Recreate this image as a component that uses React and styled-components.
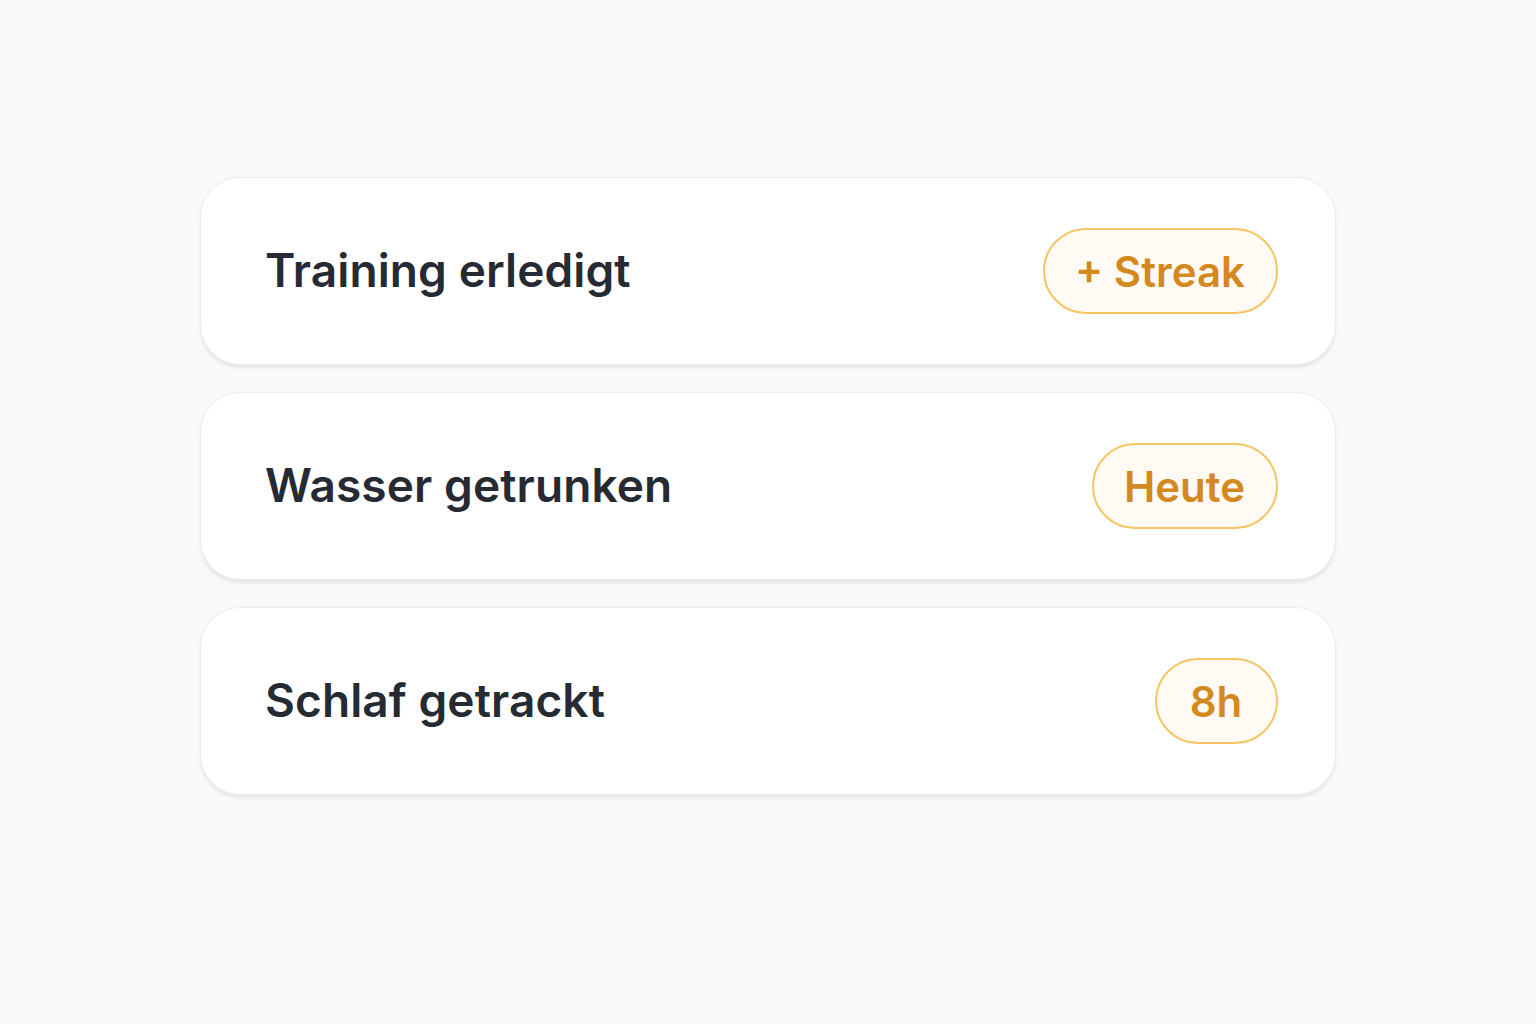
import React from "react";
import styled, { createGlobalStyle } from "styled-components";

const GlobalStyle = createGlobalStyle`
  html, body {
    margin: 0;
    padding: 0;
    background: #fafafa;
    font-family: Inter, "Noto Sans", sans-serif;
  }
`;

const Page = styled.div`
  min-height: 1024px;
  display: flex;
  justify-content: center;
  padding-top: 177px;
  box-sizing: border-box;
`;

const List = styled.div`
  width: 1136px;
  display: flex;
  flex-direction: column;
  gap: 27px;
`;

const Card = styled.div`
  height: 188px;
  box-sizing: border-box;
  display: flex;
  align-items: center;
  justify-content: space-between;
  padding: 0 57px 0 64px;
  background: #ffffff;
  border: 1.5px solid #ececec;
  border-radius: 40px;
  box-shadow: 0 3px 3px rgba(0, 0, 0, 0.06), 0 2px 12px rgba(0, 0, 0, 0.03);
`;

const Title = styled.div`
  font-size: 46px;
  font-weight: 600;
  color: #262a33;
  letter-spacing: 0.1px;
  margin-top: -2px;
`;

const Badge = styled.div`
  height: 86px;
  min-width: 123px;
  box-sizing: border-box;
  display: flex;
  align-items: center;
  justify-content: center;
  padding: 0 31px 0 30px;
  border: 2px solid #f7c462;
  border-radius: 43px;
  background: #fffbf4;
  color: #d4891e;
  font-size: 42px;
  font-weight: 600;
`;

const items = [
  { title: "Training erledigt", badge: "+ Streak" },
  { title: "Wasser getrunken", badge: "Heute" },
  { title: "Schlaf getrackt", badge: "8h" },
];

export default function App() {
  return (
    <>
      <GlobalStyle />
      <Page>
        <List>
          {items.map((item) => (
            <Card key={item.title}>
              <Title>{item.title}</Title>
              <Badge>{item.badge}</Badge>
            </Card>
          ))}
        </List>
      </Page>
    </>
  );
}
